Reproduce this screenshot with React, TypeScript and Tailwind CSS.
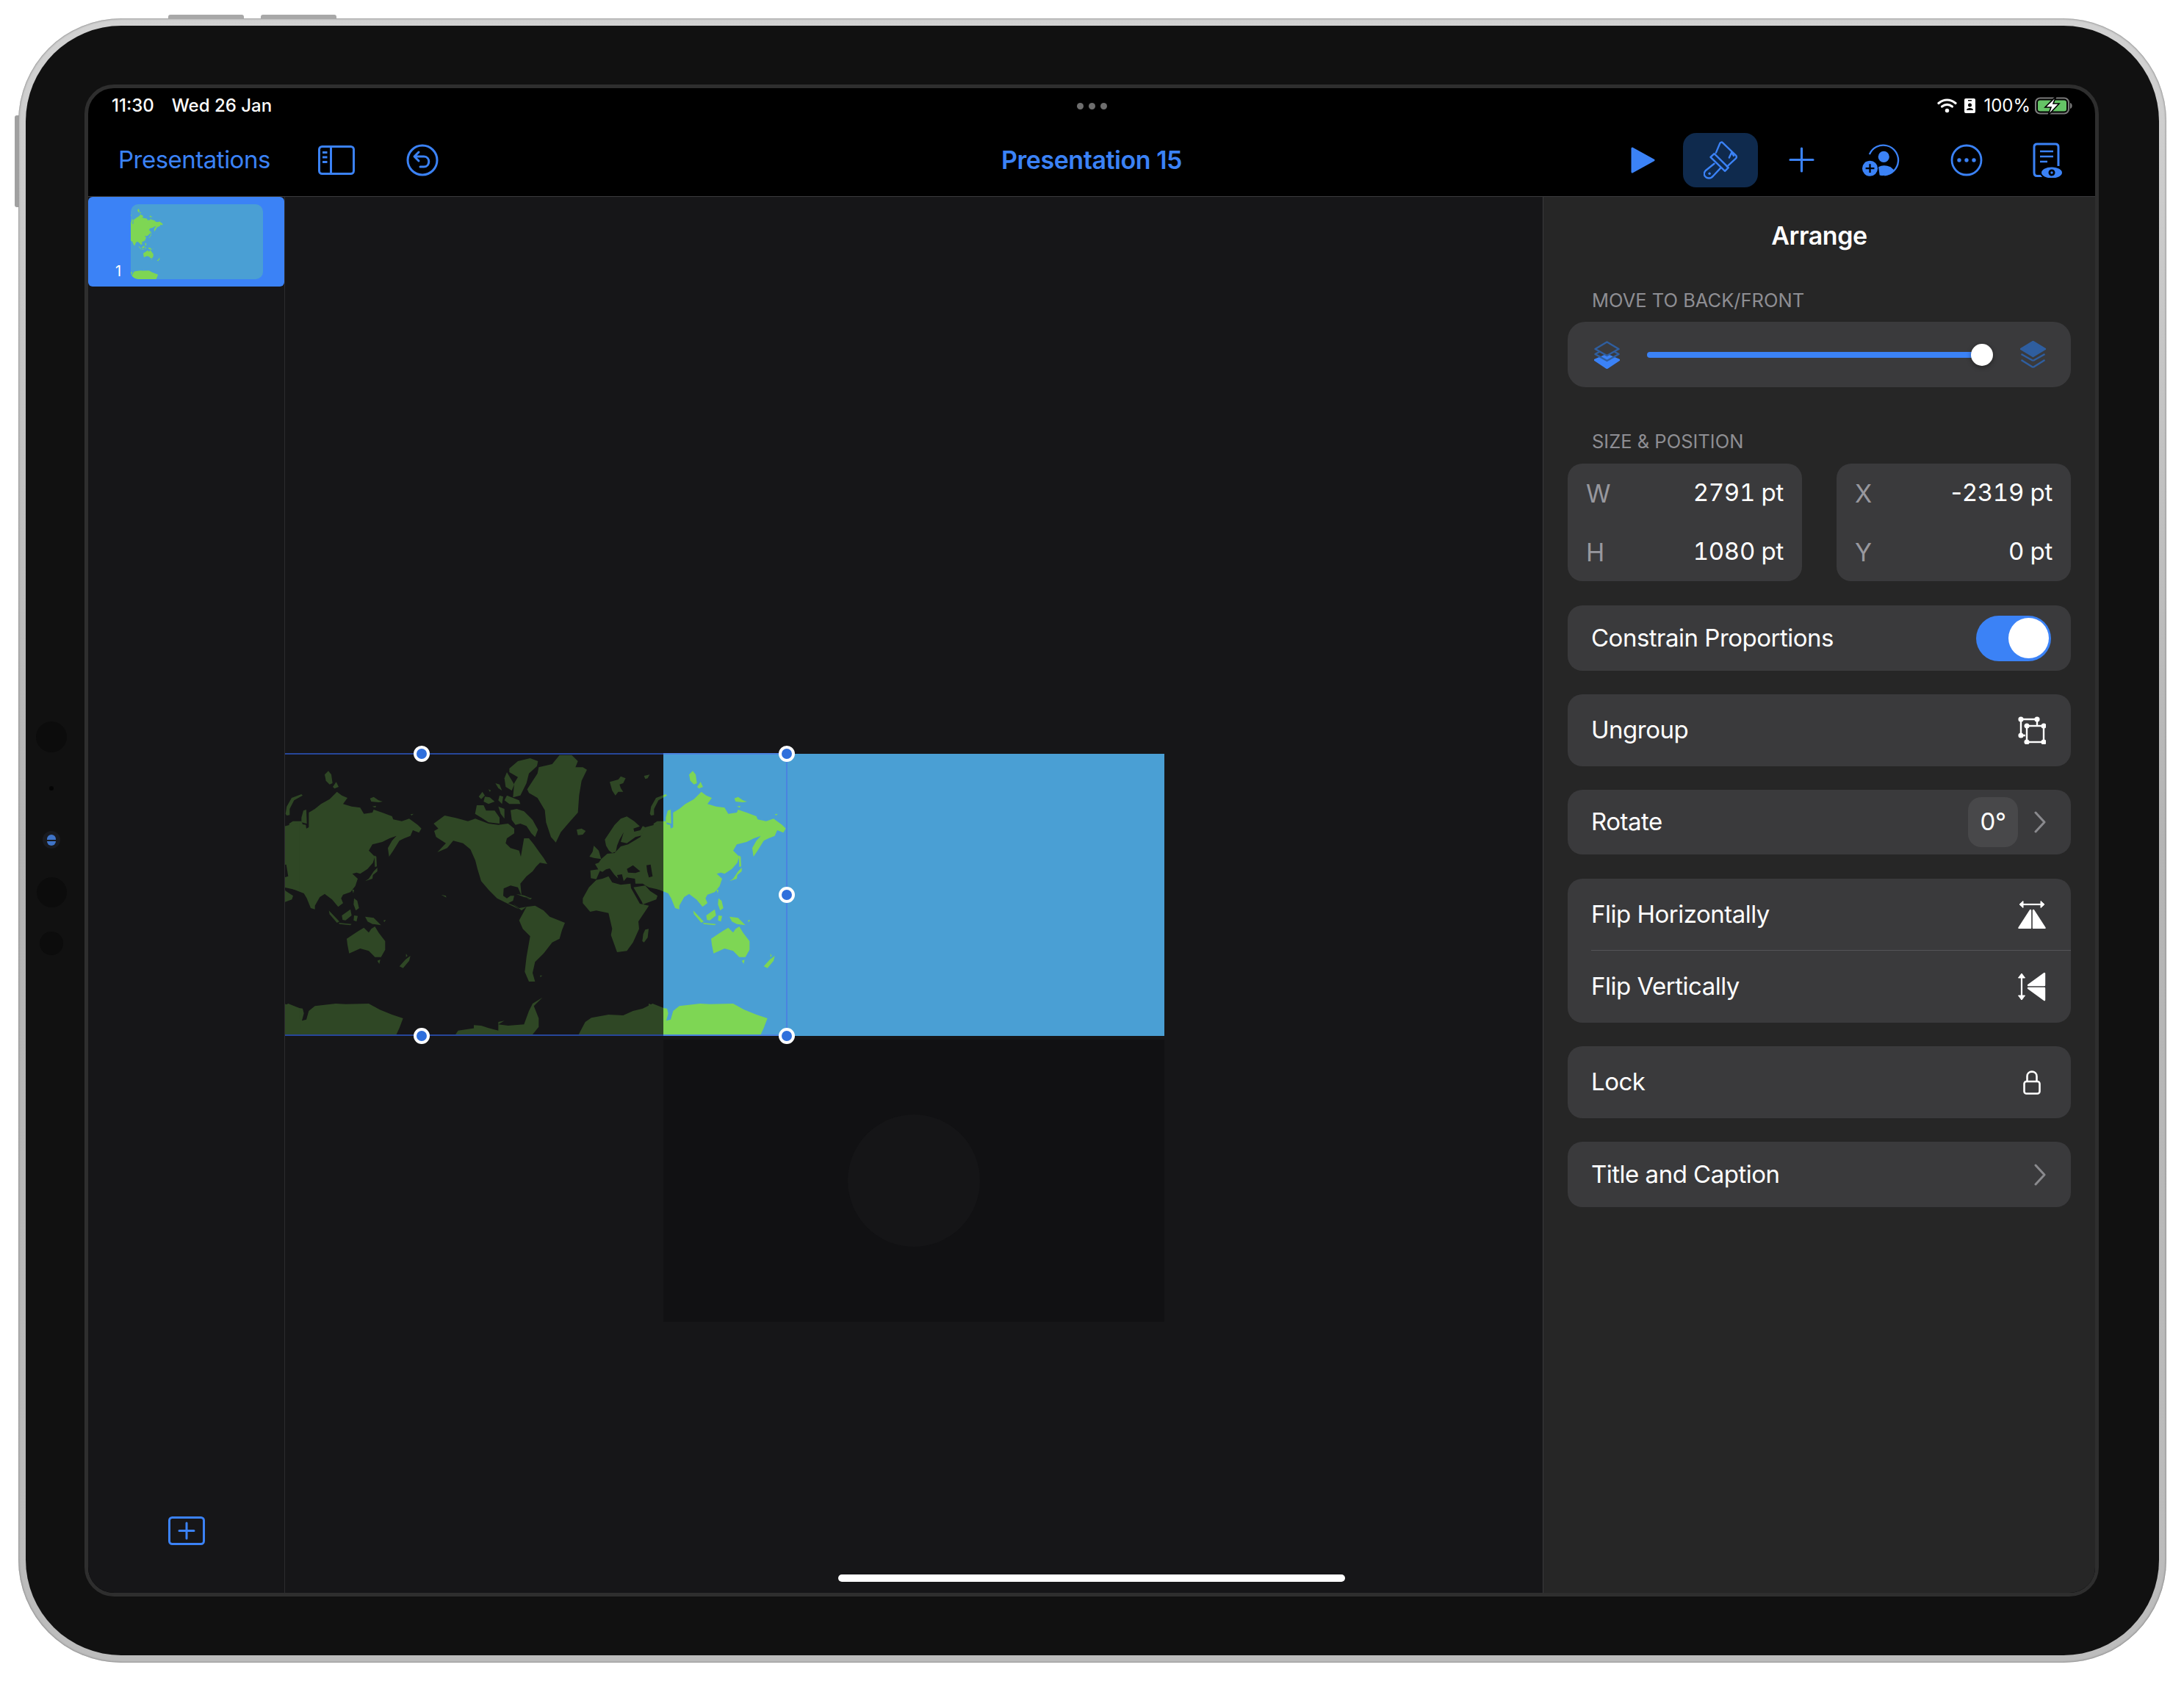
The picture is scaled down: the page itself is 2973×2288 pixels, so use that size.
import React from "react";

const BLUE = "#3b82f6";

const asia = [
  "20,285 35,275 70,275 75,288 88,290 90,305 100,300 100,240 125,225 150,205 185,185 215,155 235,170 258,180 240,205 275,215 310,220 325,245 360,240 365,228 400,240 440,255 445,268 480,275 510,265 545,290 560,305 550,322 525,312 515,335 490,345 470,355 445,395 428,420 423,385 440,355 458,335 430,345 400,360 360,370 345,395 370,420 362,445 340,470 310,490 295,485 278,490 300,510 290,540 270,565 240,575 232,590 240,610 220,625 195,595 165,572 145,585 125,620 125,635 108,630 92,590 80,570 55,560 30,550 20,548",
  "5,245 10,215 30,180 70,165 75,170 40,190 22,225 22,250 10,252",
  "70,260 78,232 90,228 92,285 70,280",
  "165,85 180,70 192,85 197,120 185,125 170,110",
  "198,135 212,115 222,135 205,142",
  "350,182 365,176 385,190 402,195 385,198 355,195",
  "360,215 375,212 372,220",
  "515,247 528,245 520,252",
  "368,415 376,420 378,460 370,462",
  "322,525 345,510 365,480 380,465 380,480 362,495 360,510 330,520",
  "277,555 285,555 282,570",
  "285,590 298,600 305,630 292,640 283,615",
  "235,660 270,635 275,660 250,680 238,678",
  "182,640 225,685 215,690 185,655",
  "222,690 275,695 270,700 225,695",
  "285,660 300,662 295,685 283,680",
  "330,665 365,670 395,700 360,695 340,685",
  "255,755 300,725 325,710 345,730 355,715 370,705 385,730 412,765 412,800 395,830 370,830 345,805 310,795 265,815 258,780",
  "380,845 392,840 388,858",
  "470,868 495,840 515,825 510,845 485,875",
  "497,815 503,825 497,830",
  "0,1020 40,1035 75,1040 80,1060 72,1090 90,1085 100,1050 125,1030 210,1020 250,1022 345,1020 390,1045 440,1065 485,1080 470,1120 455,1152 0,1152",
  "640,575 660,580 662,587",
  "405,680 415,678 408,688",
];

const west = [
  "700,300 690,295 680,312 655,318 652,305 678,296 655,275 625,256 600,265 575,290 555,320 535,350 540,375 552,395 565,405 580,400 585,375 595,350 612,320 600,360 625,365 660,340 700,330",
  "490,375 510,395 520,430 490,425 472,420 485,400",
  "500,515 525,510 550,500 565,525 600,535 640,530 642,548 678,612 715,620 672,685 675,715 650,770 625,805 585,810 560,740 565,715 550,650 500,640 475,645 445,610 445,590 470,545",
  "652,545 700,538 720,560 750,580 745,595 690,615 687,605",
  "555,115 590,105 600,92 620,100 610,120 595,125 600,140 610,155 590,155 578,170 565,150",
  "695,90 718,85 710,100 700,103",
  "700,718 714,715 710,750 695,770 688,765 692,735",
  "425,1152 455,1095 480,1078 550,1065 610,1068 650,1050 690,1040 730,1020 775,1038 780,1152",
  "420,310 440,305 457,315 445,330 425,332",
];

const america = [
  "-164,285 -119,252 -74,262 -24,275 6,265 60,285 100,290 140,285 165,305 165,325 135,345 130,365 150,385 185,395 192,420 198,385 205,345 225,345 245,370 270,405 285,425 300,450 270,445 255,460 240,480 215,500 190,530 195,580 180,545 150,538 122,550 120,580 135,590 150,580 165,580 160,600 140,610 165,620 185,635 125,605 95,590 60,555 30,520 15,470 6,435 -14,390 -44,365 -84,355 -109,385 -149,402 -114,365 -154,340 -162,315 -145,305",
  "175,225 205,235 240,270 262,310 250,340 235,325 215,295 190,285 170,290 155,270 150,230",
  "145,60 180,30 230,18 262,30 258,50 225,80 215,120 190,170 160,178 165,120 180,95 145,75",
  "125,100 135,75 165,125 155,150 130,135",
  "105,170 120,175 115,205 100,190",
  "135,170 185,190 190,205 145,205 125,190",
  "20,175 35,155 45,170 30,185",
  "45,175 65,178 85,195 60,205 40,195",
  "88,120 105,125 115,150 100,140",
  "60,145 70,150 65,155",
  "5,245 12,210 40,210 50,232 85,232 105,260 105,285 60,280 30,260",
  "100,215 125,225 125,265 110,245",
  "218,145 260,80 265,55 320,42 350,5 400,5 425,30 415,55 445,55 462,65 440,110 430,170 425,240 385,285 355,320 335,362 315,340 295,280 290,230 260,180 225,160",
  "185,680 215,625 250,620 285,640 310,665 372,690 360,720 350,755 320,770 285,815 250,850 240,895 250,930 225,930 208,890 215,830 230,745 200,715",
  "160,612 185,630 215,625 195,640 175,625",
  "172,572 205,578 235,590 205,585",
  "215,590 237,588 232,595",
  "270,905 280,905 272,912",
  "0,1108 30,1110 60,1120 100,1130 100,1095 125,1090 100,1105 140,1110 205,1105 225,1050 240,1020 280,995 245,1030 265,1080 265,1115 235,1152 0,1152",
  "-79,1152 -64,1130 6,1120 6,1152",
];

const europeMain =
  "M775,280 L775,560 L745,552 L714,545 L705,540 L690,530 L660,530 L658,510 L625,505 L612,520 L605,492 L585,495 L590,510 L575,495 L555,468 L540,472 L525,482 L515,478 L500,512 L478,508 L476,476 L508,472 L495,450 L510,445 L520,430 L545,408 L575,405 L600,378 L630,370 L680,340 L700,300 Z M625,470 L650,455 L680,480 L660,487 L630,485 Z M705,455 L722,452 L730,500 L715,505 L708,480 Z";

function LandOnce() {
  return (
    <>
      <g>
        {asia.map((p) => (
          <polygon key={p} points={p} />
        ))}
      </g>
      <g transform="translate(774 0)">
        {america.map((p) => (
          <polygon key={p} points={p} />
        ))}
      </g>
      <g transform="translate(-714 0)">
        {west.map((p) => (
          <polygon key={p} points={p} />
        ))}
        <path d={europeMain} fillRule="evenodd" />
      </g>
    </>
  );
}

function Land({ fill }: { fill: string }) {
  return (
    <g fill={fill}>
      <LandOnce />
      <g transform="translate(1488 0)">
        <LandOnce />
      </g>
    </g>
  );
}

function Handle({ className }: { className: string }) {
  return (
    <div
      className={`absolute w-[22px] h-[22px] rounded-full bg-[#2f6fdc] border-[4px] border-white ${className}`}
    />
  );
}

function Chevron() {
  return (
    <svg width="16" height="30" viewBox="0 0 16 30" fill="none" stroke="#8a8a8e" strokeWidth="3" strokeLinecap="round" strokeLinejoin="round">
      <path d="M2 2 L14 15 L2 28" />
    </svg>
  );
}

function Card({ className, children }: { className: string; children: React.ReactNode }) {
  return (
    <div className={`flex items-center justify-between bg-[#3a3a3c] rounded-[20px] pl-[32px] pr-[34px] ${className}`}>
      {children}
    </div>
  );
}

function Label({ children, className }: { children: React.ReactNode; className: string }) {
  return (
    <div className={`flex items-end pl-[66px] pb-[17px] text-[25.5px] leading-[24px] text-[#8e8e93] ${className}`}>{children}</div>
  );
}

function SizeCard({ a, av, b, bv, neg }: { a: string; av: string; b: string; bv: string; neg?: boolean }) {
  const row = (k: string, v: string, minus?: boolean) => (
    <div className="flex h-[80px] items-center justify-between pl-[25px] pr-[25px]">
      <span className="text-[34px] text-[#98989e]">{k}</span>
      <span className="text-[33px] tracking-[-0.3px] text-white">
        {minus ? "-" : ""}
        <span className="tabular-nums">{v}</span>
      </span>
    </div>
  );
  return (
    <div className="w-[319px] h-[160px] bg-[#3a3a3c] rounded-[20px]">
      {row(a, av, neg)}
      {row(b, bv)}
    </div>
  );
}

function Layers({ top }: { top: boolean }) {
  const dim = "#2f5e9f";
  return (
    <svg width="35" height="38" viewBox="0 0 35 38" fill="none" strokeWidth="2.5" strokeLinejoin="round">
      {top ? (
        <>
          <path d="M17.5 27 L1.5 18 M17.5 27 L33.5 18 M17.5 36 L1.5 26 M17.5 36 L33.5 26" stroke={dim} />
          <path d="M17.5 1 L34 11 L17.5 21 L1 11 Z" fill={dim} stroke={dim} />
        </>
      ) : (
        <>
          <path d="M17.5 19 L34 26 L17.5 37 L1 26 Z" fill={BLUE} stroke={BLUE} />
          <path d="M17.5 9 L33.5 18 L17.5 27 L1.5 18 Z" stroke={dim} />
          <path d="M17.5 1.5 L33.5 11 L17.5 20 L1.5 11 Z" fill="#3a3a3c" stroke={dim} />
        </>
      )}
    </svg>
  );
}

export default function App() {
  return (
    <div className="w-[2973px] h-[2288px] bg-white pl-[25px] pt-[25px] overflow-hidden" style={{ fontFamily: "Inter, 'Noto Sans', sans-serif" }}>
      <div className="relative w-[2924px] h-[2238px] rounded-[140px] bg-gradient-to-b from-[#d2d2d2] via-[#b4b4b4] to-[#bdbdbd] p-[10px] shadow-[inset_0_0_3px_#666]">
        {/* hardware buttons */}
        <div className="absolute left-[204px] -top-[5px] w-[103px] h-[6px] rounded-t-[3px] bg-[#a8a8a8]" />
        <div className="absolute left-[330px] -top-[5px] w-[103px] h-[6px] rounded-t-[3px] bg-[#a8a8a8]" />
        <div className="absolute -left-[5px] top-[132px] w-[6px] h-[125px] rounded-l-[3px] bg-[#a0a0a0]" />

        <div className="relative w-full h-full rounded-[130px] bg-[#111111] p-[80px]">
          {/* side camera array */}
          <div className="absolute left-[14px] top-[947px] w-[42px] h-[42px] rounded-full bg-[#0c0c0c]" />
          <div className="absolute left-[32px] top-[1035px] w-[6px] h-[6px] rounded-full bg-[#050505]" />
          <div className="absolute left-[23px] top-[1096px] w-[24px] h-[24px] rounded-full bg-[#191b20] flex flex-col items-center justify-center gap-[2px]">
            <div className="w-[12px] h-[7px] rounded-t-full bg-[#3f74c8]" />
            <div className="w-[12px] h-[6px] rounded-b-full bg-[#3f74c8]" />
          </div>
          <div className="absolute left-[15px] top-[1159px] w-[41px] h-[41px] rounded-full bg-[#0c0c0c]" />
          <div className="absolute left-[19px] top-[1233px] w-[32px] h-[32px] rounded-full bg-[#0c0c0c]" />

          <div className="relative w-[2742px] h-[2058px] rounded-[40px] border-[5px] border-[#2e2e2e] bg-black overflow-hidden flex flex-col">
            {/* top bars */}
            <div className="relative h-[48px] flex items-center justify-between pl-[32px] pr-[30px] text-white text-[24px]">
              <div className="flex gap-[24px] font-medium">
                <span>11:30</span>
                <span>Wed 26 Jan</span>
              </div>
              <div className="absolute left-[1346px] top-[20px] flex gap-[7px]">
                <span className="w-[9px] h-[9px] rounded-full bg-[#6e6e6e]" />
                <span className="w-[9px] h-[9px] rounded-full bg-[#6e6e6e]" />
                <span className="w-[9px] h-[9px] rounded-full bg-[#6e6e6e]" />
              </div>
              <div className="flex items-center">
                <svg width="27" height="20" viewBox="0 0 27 20" fill="none" stroke="white" strokeWidth="3.2" strokeLinecap="round">
                  <path d="M2 6.5 C9 0.5 18 0.5 25 6.5" />
                  <path d="M6.5 11 C11 7.5 16 7.5 20.5 11" />
                  <circle cx="13.5" cy="16.5" r="2" fill="white" stroke="white" strokeWidth="1.5" />
                </svg>
                <svg className="ml-[10px]" width="15" height="20" viewBox="0 0 15 20">
                  <rect width="15" height="20" rx="2" fill="white" />
                  <rect x="5" y="2" width="5" height="1.5" fill="black" />
                  <circle cx="7.5" cy="9" r="2.5" fill="black" />
                  <path d="M3 16 C3 12 12 12 12 16 Z" fill="black" />
                </svg>
                <span className="ml-[11px] font-normal">100%</span>
                <svg className="ml-[6px]" width="52" height="28" viewBox="0 0 52 28">
                  <rect x="1" y="3.5" width="45" height="21" rx="6" fill="none" stroke="#7a7a7a" strokeWidth="2.2" />
                  <rect x="4" y="6.5" width="39" height="15" rx="3" fill="#65c466" />
                  <path d="M48 10 C51.5 11 51.5 17 48 18 Z" fill="#7a7a7a" />
                  <path d="M29 1 L14 16 L22 16 L18 27 L33 11 L25 11 Z" fill="white" stroke="black" strokeWidth="1.6" />
                </svg>
              </div>
            </div>
            <div className="relative h-[100px] shrink-0 flex items-center border-b border-[#3c3c3e] pl-[41px] pr-[44px]">
              <span className="text-[33px] tracking-[-0.5px] text-[#3b82f6]">Presentations</span>
              <svg className="ml-[65px]" width="50" height="40" viewBox="0 0 50 40" fill="none" stroke={BLUE} strokeWidth="3">
                <rect x="1.5" y="1.5" width="47" height="37" rx="4" />
                <path d="M17.5 1.5 V38.5" />
                <path d="M6 9.5 H12.5 M6 16 H12.5 M6 22.5 H12.5" />
              </svg>
              <svg className="ml-[70px]" width="44" height="44" viewBox="0 0 44 44" fill="none" stroke={BLUE} strokeWidth="3" strokeLinecap="round" strokeLinejoin="round">
                <circle cx="22" cy="22" r="20" />
                <path d="M17 11 L11 17 L17 23 M11.5 17 H24 C33 17 33 31 24 31 H19" />
              </svg>
              <span className="absolute left-[1243px] w-[245px] text-center text-[34px] tracking-[-0.45px] font-semibold text-[#3b82f6] whitespace-nowrap">Presentation 15</span>
              <div className="flex-1" />
              <svg width="33" height="36" viewBox="0 0 33 36" fill={BLUE} stroke={BLUE} strokeWidth="3" strokeLinejoin="round">
                <path d="M2 2 L31 18 L2 34 Z" />
              </svg>
              <div className="ml-[38px] w-[102px] h-[74px] rounded-[18px] bg-[#0f2a4d] flex items-center justify-center">
                <svg width="46" height="52" viewBox="122 70 136 152" fill="none" stroke={BLUE} strokeWidth="7" strokeLinecap="round" strokeLinejoin="round">
                  <path d="M172 116 L188 78 Q193 70 200 77 L253 128 Q257 134 252 139 L216 172" />
                  <path d="M225 136 L235 115 L243 128" />
                  <path d="M165 120 L150 134 L208 190 L222 176 Z" />
                  <path d="M165 160 L130 188 Q117 204 133 216 Q150 224 162 208 L190 178" />
                  <circle cx="146" cy="200" r="5" fill={BLUE} stroke="none" />
                </svg>
              </div>
              <svg className="ml-[42px]" width="35" height="35" viewBox="0 0 35 35" stroke={BLUE} strokeWidth="3.2" strokeLinecap="round">
                <path d="M17.5 2 V33 M2 17.5 H33" />
              </svg>
              <svg className="ml-[65px]" width="51" height="44" viewBox="768 78 155 132">
                <path d="M798 120 A62 62 0 1 1 860 206" fill="none" stroke={BLUE} strokeWidth="7" />
                <circle cx="857" cy="130" r="23" fill={BLUE} />
                <path d="M835 172 Q857 160 885 172 L900 185 A62 62 0 0 1 840 206 Z" fill={BLUE} />
                <circle cx="800" cy="178" r="32" fill={BLUE} />
                <path d="M782 178 H818 M800 160 V196" stroke="black" strokeWidth="7" />
              </svg>
              <svg className="ml-[69px]" width="44" height="44" viewBox="0 0 44 44">
                <circle cx="22" cy="22" r="20" fill="none" stroke={BLUE} strokeWidth="2.8" />
                <circle cx="12" cy="22" r="2.7" fill={BLUE} />
                <circle cx="22" cy="22" r="2.7" fill={BLUE} />
                <circle cx="32" cy="22" r="2.7" fill={BLUE} />
              </svg>
              <svg className="ml-[68px]" width="41" height="48" viewBox="0 0 41 48">
                <path d="M14 45.5 H6 Q2 45.5 2 41 V6 Q2 2 6 2 H31 Q35 2 35 6 V32" fill="none" stroke={BLUE} strokeWidth="3" />
                <path d="M10 12 H28 M10 19 H28 M10 26 H20" stroke={BLUE} strokeWidth="2.4" />
                <ellipse cx="26" cy="41" rx="15" ry="8.5" fill={BLUE} stroke="black" strokeWidth="2" />
                <circle cx="26" cy="41" r="4.5" fill="black" />
                <circle cx="26" cy="41" r="1.7" fill={BLUE} />
              </svg>
            </div>

            {/* main area */}
            <div className="relative flex-1 flex min-h-0 bg-[#161618]">
              {/* slide navigator */}
              <div className="w-[268px] shrink-0 border-r border-[#2c2c2e] flex flex-col items-center justify-between pb-[65px]">
                <div className="w-[267px] h-[122px] bg-[#3b82f6] rounded-[6px] flex items-end pl-[58px] pr-[29px] pt-[10px] pb-[10px] relative">
                  <span className="absolute left-[37px] bottom-[9px] text-[20px] leading-[24px] text-white">1</span>
                  <div className="w-[180px] h-[102px] rounded-[10px] bg-[#4a9fd4] overflow-hidden">
                    <svg className="w-[44px] h-[102px]" viewBox="1548 0 504 1152" preserveAspectRatio="none">
                      <Land fill="#7ed654" />
                    </svg>
                  </div>
                </div>
                <svg width="50" height="39" viewBox="0 0 50 39" fill="none" stroke={BLUE} strokeWidth="3" strokeLinecap="round">
                  <rect x="1.5" y="1.5" width="47" height="36" rx="4" />
                  <path d="M25 9 V30 M15 19.5 H35" />
                </svg>
              </div>

              {/* canvas */}
              <div className="relative flex-1 min-w-0">
                <div className="absolute left-0 top-[758px] flex flex-col">
                  <div className="flex h-[384px]">
                    <svg className="w-[515px] h-[384px]" viewBox="3 0 1545 1152" preserveAspectRatio="none">
                      <Land fill="#2f4725" />
                    </svg>
                    <div className="w-[682px] h-[384px] bg-[#4a9fd4]">
                      <svg className="w-[168px] h-[384px]" viewBox="1548 0 504 1152" preserveAspectRatio="none">
                        <Land fill="#7ed654" />
                      </svg>
                    </div>
                  </div>
                  <div className="ml-[515px] mt-[5px] w-[682px] h-[384px] bg-[#111113] flex items-center justify-center">
                    <div className="w-[180px] h-[180px] rounded-full bg-[#151517]" />
                  </div>
                </div>
                {/* selection */}
                <div className="absolute left-0 top-[757px] w-[683px] h-[385px] border-y-[2px] border-[#27469a]" />
                <div className="absolute left-[682px] top-[758px] w-[2px] h-[384px] bg-[#4a83e0]" />
                <div className="absolute left-[515px] top-[757px] w-[168px] h-[2px] bg-[#4a83e0]" />
                <div className="absolute left-[515px] top-[1140px] w-[168px] h-[2px] bg-[#4a83e0]" />
                <Handle className="left-[175px] top-[747px]" />
                <Handle className="left-[672px] top-[747px]" />
                <Handle className="left-[672px] top-[939px]" />
                <Handle className="left-[175px] top-[1131px]" />
                <Handle className="left-[672px] top-[1131px]" />
              </div>

              {/* inspector */}
              <div className="w-[752px] shrink-0 bg-[#262626] border-l border-[#3a3a3c] text-white">
                <div className="h-[104px] flex items-center justify-center text-[34px] tracking-[-0.4px] font-semibold">Arrange</div>
                <Label className="h-[66px]">MOVE TO BACK/FRONT</Label>
                <div className="ml-[33px] w-[685px] h-[89px] bg-[#3a3a3c] rounded-[24px] flex items-center pl-[36px] pr-[34px]">
                  <Layers top={false} />
                  <div className="relative ml-[37px] w-[456px] h-[8px] rounded-full bg-[#3b82f6]">
                    <div className="absolute -right-[15px] -top-[11px] w-[30px] h-[30px] rounded-full bg-white shadow-[0_2px_6px_rgba(0,0,0,0.4)]" />
                  </div>
                  <div className="flex-1" />
                  <Layers top />
                </div>
                <Label className="h-[104px] !pb-[18px]">SIZE &amp; POSITION</Label>
                <div className="ml-[33px] w-[685px] flex justify-between">
                  <SizeCard a="W" av="2791 pt" b="H" bv="1080 pt" />
                  <SizeCard a="X" av="2319 pt" b="Y" bv="0 pt" neg />
                </div>
                <div className="ml-[33px] w-[685px] text-[33px] tracking-[-0.5px]">
                  <Card className="mt-[33px] h-[89px] !pr-[27px]">
                    <span>Constrain Proportions</span>
                    <div className="w-[102px] h-[62px] rounded-full bg-[#3b82f6] flex items-center justify-end pr-[3px]">
                      <div className="w-[55px] h-[55px] rounded-full bg-white" />
                    </div>
                  </Card>
                  <Card className="mt-[32px] h-[98px]">
                    <span>Ungroup</span>
                    <svg width="38" height="38" viewBox="0 0 38 38" fill="white" stroke="white" strokeWidth="2.4">
                      <path d="M4 4 H26 M4 4 V26 M26 4 V12 M4 26 H10" fill="none" />
                      <rect x="12" y="13" width="23" height="22" fill="none" />
                      <circle cx="4" cy="4" r="2.4" />
                      <circle cx="26" cy="4" r="2.4" />
                      <circle cx="4" cy="26" r="2.4" />
                      <circle cx="12" cy="13" r="2.4" />
                      <circle cx="35" cy="13" r="2.4" />
                      <circle cx="12" cy="35" r="2.4" />
                      <circle cx="35" cy="35" r="2.4" />
                    </svg>
                  </Card>
                  <Card className="mt-[32px] h-[88px]">
                    <span>Rotate</span>
                    <div className="flex items-center">
                      <div className="w-[68px] h-[68px] rounded-[18px] bg-[#48484a] flex items-center justify-center">0°</div>
                      <div className="ml-[22px] flex">
                        <Chevron />
                      </div>
                    </div>
                  </Card>
                  <div className="mt-[33px] h-[196px] bg-[#3a3a3c] rounded-[20px] pl-[32px]">
                    <div className="h-[98px] flex items-center justify-between pr-[34px] border-b border-[#545458]">
                      <span>Flip Horizontally</span>
                      <svg width="38" height="38" viewBox="0 0 38 38" fill="white" stroke="white" strokeLinejoin="round">
                        <path d="M4 5 H34" fill="none" strokeWidth="2.2" />
                        <path d="M7 0.5 L2 5 L7 9.5 Z M31 0.5 L36 5 L31 9.5 Z" strokeWidth="1" />
                        <path d="M17 13 L17 37 L1.5 37 Z" strokeWidth="2.4" />
                        <path d="M21 13 L21 37 L36.5 37 Z" strokeWidth="2.4" />
                      </svg>
                    </div>
                    <div className="h-[98px] flex items-center justify-between pr-[34px]">
                      <span>Flip Vertically</span>
                      <svg width="38" height="40" viewBox="0 0 38 40" fill="white" stroke="white" strokeLinejoin="round">
                        <path d="M5 4 V36" fill="none" strokeWidth="2.2" />
                        <path d="M0.5 8 L5 2 L9.5 8 Z M0.5 32 L5 38 L9.5 32 Z" strokeWidth="1" />
                        <path d="M36 2 L36 18 L14 18 Z" strokeWidth="2.4" />
                        <path d="M36 38 L36 22 L14 22 Z" strokeWidth="2.4" />
                      </svg>
                    </div>
                  </div>
                  <Card className="mt-[32px] h-[98px] !pr-[41px]">
                    <span>Lock</span>
                    <svg width="24" height="33" viewBox="0 0 24 33" fill="none" stroke="white" strokeWidth="2.6">
                      <rect x="1.5" y="15" width="21" height="16.5" rx="3" />
                      <path d="M5.5 15 V8 C5.5 -0.5 18.5 -0.5 18.5 8 V15" />
                    </svg>
                  </Card>
                  <Card className="mt-[32px] h-[89px]">
                    <span>Title and Caption</span>
                    <Chevron />
                  </Card>
                </div>
              </div>

              {/* home indicator */}
              <div className="absolute left-[1021px] bottom-[15px] w-[690px] h-[10px] rounded-full bg-white" />
            </div>
          </div>
        </div>
      </div>
    </div>
  );
}
